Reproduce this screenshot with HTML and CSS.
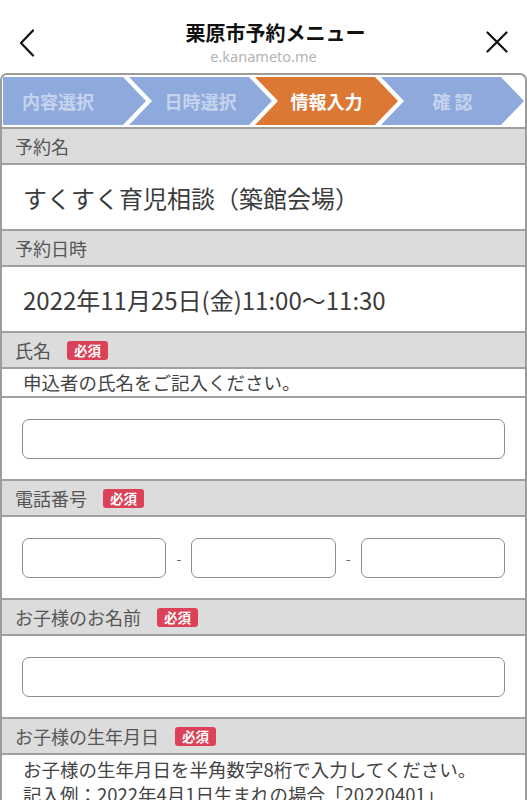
FILE: index.html
```html
<!DOCTYPE html>
<html lang="ja">
<head>
<meta charset="utf-8">
<title>栗原市予約メニュー</title>
<link rel="stylesheet" href="styles.css">
</head>
<body>
<header class="topbar">
  <div class="nav-left">
    <svg width="16" height="28" viewBox="0 0 16 28"><polyline points="14,1.5 2,14 14,26.5" fill="none" stroke="#111" stroke-width="2.2" stroke-linecap="round" stroke-linejoin="round"/></svg>
  </div>
  <div class="title-block">
    <div class="title">栗原市予約メニュー</div>
    <div class="subtitle">e.kanameto.me</div>
  </div>
  <div class="nav-right">
    <svg width="22" height="22" viewBox="0 0 22 22"><path d="M1.5 1.5 L20.5 20.5 M20.5 1.5 L1.5 20.5" fill="none" stroke="#111" stroke-width="2.2" stroke-linecap="round"/></svg>
  </div>
</header>

<main class="form-card">
  <div class="steps">
    <div class="step step-first">内容選択</div>
    <div class="step">日時選択</div>
    <div class="step step-active">情報入力</div>
    <div class="step">確&nbsp;認</div>
  </div>

  <div class="label-row">予約名</div>
  <div class="value-row">すくすく育児相談（築館会場）</div>

  <div class="label-row">予約日時</div>
  <div class="value-row">2022年11月25日(金)11:00〜11:30</div>

  <div class="label-row">氏名<span class="badge">必須</span></div>
  <div class="note-row">申込者の氏名をご記入ください。</div>
  <div class="input-row"><input class="text-input" type="text"></div>

  <div class="label-row">電話番号<span class="badge">必須</span></div>
  <div class="input-row">
    <input class="text-input" type="text">
    <span class="dash">-</span>
    <input class="text-input" type="text">
    <span class="dash">-</span>
    <input class="text-input" type="text">
  </div>

  <div class="label-row">お子様のお名前<span class="badge">必須</span></div>
  <div class="input-row"><input class="text-input" type="text"></div>

  <div class="label-row">お子様の生年月日<span class="badge">必須</span></div>
  <div class="note-row note-multi">
    <p>お子様の生年月日を半角数字8桁で入力してください。</p>
    <p>記入例：2022年4月1日生まれの場合「20220401」</p>
  </div>
</main>
</body>
</html>
```

FILE: styles.css
```css
* {
  box-sizing: border-box;
}

html, body {
  margin: 0;
  padding: 0;
  background: #ffffff;
}

body {
  font-family: "Noto Sans CJK JP", "Noto Sans", sans-serif;
  color: #444;
  width: 527px;
  overflow: hidden;
}

/* Top bar */
.topbar {
  display: flex;
  height: 73px;
  padding-top: 20px;
}

.nav-left {
  width: 54px;
  padding-left: 19px;
  padding-top: 9px;
}

.nav-right {
  width: 54px;
  padding-top: 11px;
  padding-right: 19px;
  display: flex;
  justify-content: flex-end;
  align-items: flex-start;
}

.nav-left svg,
.nav-right svg {
  display: block;
}

.title-block {
  flex: 1;
  text-align: center;
}

.title {
  font-size: 20px;
  font-weight: 700;
  line-height: 26px;
  color: #111;
  padding-left: 24px;
}

.subtitle {
  font-family: "Noto Sans", "Liberation Sans", sans-serif;
  font-size: 14.5px;
  line-height: 20px;
  color: #b3b3b3;
}

/* Card */
.form-card {
  border: 2px solid #9c9c9c;
  border-bottom: none;
  border-radius: 7px 7px 0 0;
  min-height: 760px;
}

.steps {
  display: flex;
  padding: 2px 0 2px 1px;
}

.step {
  flex: 0 0 143px;
  height: 48px;
  margin-left: -17px;
  padding: 0 23px;
  display: flex;
  align-items: center;
  justify-content: center;
  background: #8eaadc;
  color: #c6d3ee;
  font-size: 18px;
  font-weight: 700;
  clip-path: polygon(0 0, calc(100% - 23px) 0, 100% 50%, calc(100% - 23px) 100%, 0 100%, 23px 50%);
}

.step-first {
  margin-left: 0;
  padding-left: 0;
  padding-right: 33px;
  clip-path: polygon(0 0, calc(100% - 23px) 0, 100% 50%, calc(100% - 23px) 100%, 0 100%);
}

.step-active {
  background: #dc7734;
  color: #ffffff;
}

/* Rows */
.label-row {
  border-top: 2px solid #a0a0a0;
  background: #dcdcdc;
  height: 36px;
  display: flex;
  align-items: center;
  padding-left: 13px;
  font-size: 18px;
  color: #555;
}

.badge {
  margin-left: 16px;
  background: #dc4257;
  color: #fff;
  font-size: 13.5px;
  font-weight: 700;
  line-height: 19px;
  height: 19px;
  padding: 0 7px;
  border-radius: 3px;
}

.value-row {
  border-top: 2px solid #a0a0a0;
  height: 66px;
  display: flex;
  align-items: center;
  padding-left: 21px;
  font-size: 24px;
  color: #3c3c3c;
}

.note-row {
  border-top: 2px solid #a0a0a0;
  padding: 0 21px;
  font-size: 18.5px;
  line-height: 27px;
  color: #444;
}

.note-multi {
  padding-top: 2px;
  line-height: 25px;
}

.note-multi p {
  margin: 0;
}

.input-row {
  border-top: 2px solid #a0a0a0;
  height: 83px;
  display: flex;
  align-items: center;
  padding: 0 20px;
}

.text-input {
  flex: 1;
  min-width: 0;
  width: 0;
  height: 40px;
  border: 1.5px solid #8c8c8c;
  border-radius: 7px;
  background: #fff;
  margin: 0;
  padding: 0 10px;
  font: inherit;
}

.dash {
  width: 25px;
  text-align: center;
  font-size: 14px;
  color: #666;
}
```
